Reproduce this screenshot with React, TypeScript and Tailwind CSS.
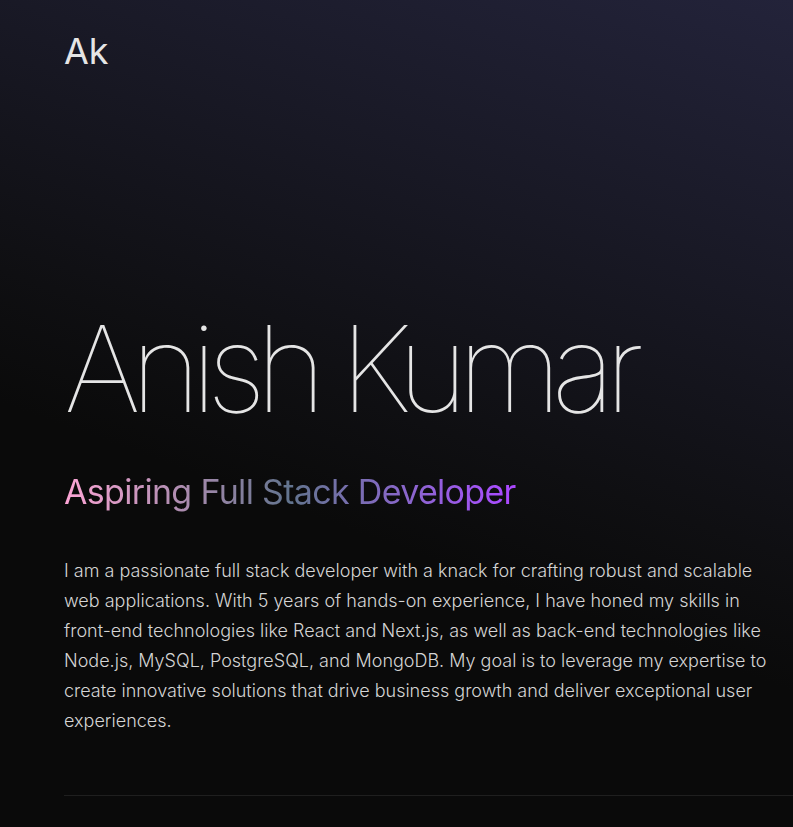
import React from 'react';

const App: React.FC = () => {
  return (
    <div className="min-h-screen w-full overflow-hidden bg-[#0a0a0a] bg-[linear-gradient(200deg,#23233a_0%,#181824_28%,#0f0f12_50%,#0a0a0a_62%)] font-['Inter','Noto_Sans',sans-serif] text-neutral-200">
      <header className="pl-16 pt-[31px]">
        <span className="text-[36px] leading-[40px] font-normal text-neutral-200">Ak</span>
      </header>

      <section className="pl-16 pt-[238px]">
        <h1 className="text-[120px] leading-[120px] font-thin tracking-[-0.083em] text-neutral-200">
          Anish Kumar
        </h1>

        <h2 className="mt-[43px] inline-block bg-gradient-to-r from-pink-300 via-slate-500 to-purple-500 bg-clip-text text-[34px] leading-[40px] font-normal tracking-[-0.02em] text-transparent">
          Aspiring Full Stack Developer
        </h2>

        <p className="mt-[44px] max-w-[712px] text-[18px] leading-[30px] font-light text-neutral-300">
          I am a passionate full stack developer with a knack for crafting robust and scalable web
          applications. With 5 years of hands-on experience, I have honed my skills in front-end
          technologies like React and Next.js, as well as back-end technologies like Node.js, MySQL,
          PostgreSQL, and MongoDB. My goal is to leverage my expertise to create innovative
          solutions that drive business growth and deliver exceptional user experiences.
        </p>

        <div className="mt-[59px] h-px w-full bg-[#1f1f1f]" />
      </section>
    </div>
  );
};

export default App;
